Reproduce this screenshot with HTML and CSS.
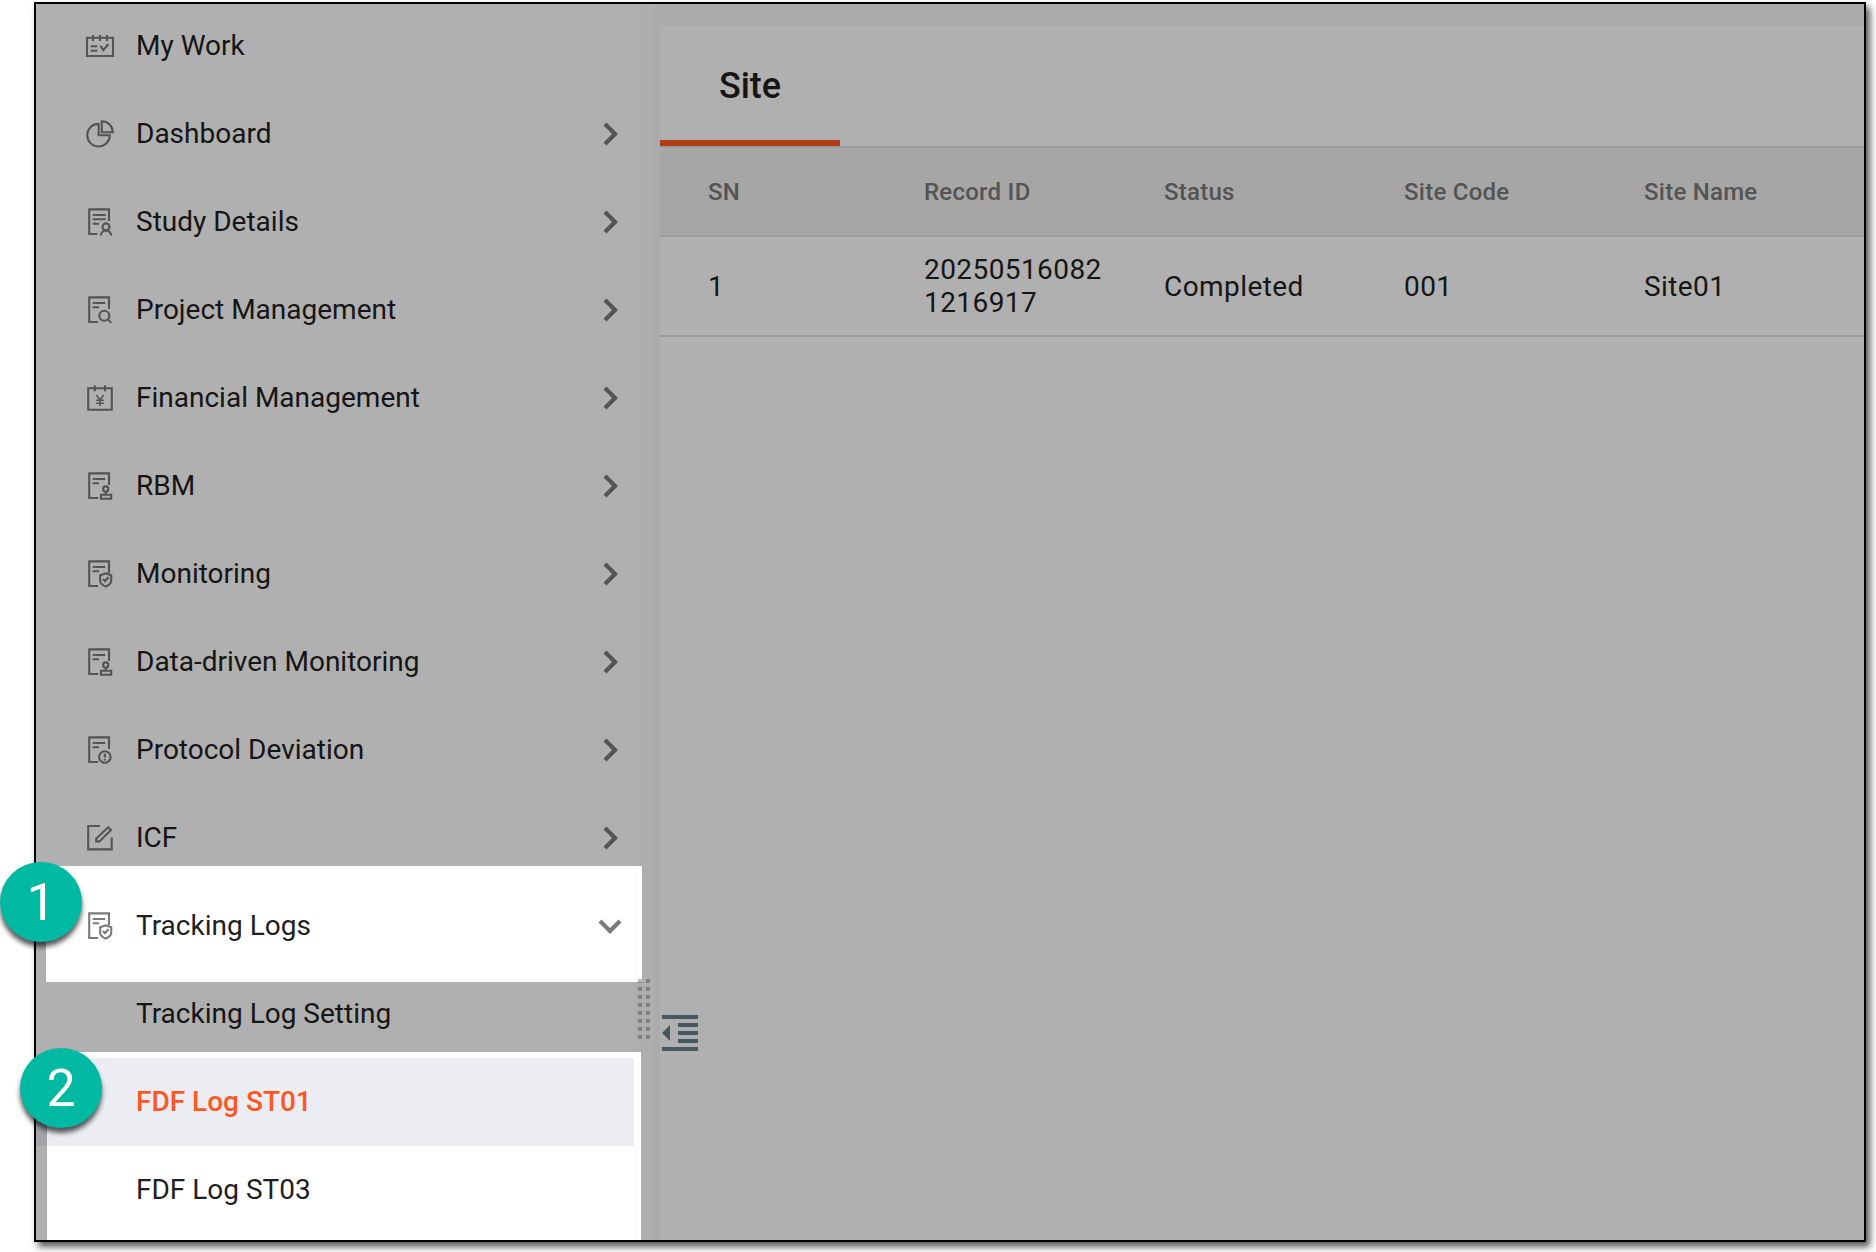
FILE: index.html
```html
<!DOCTYPE html>
<html lang="en">
<head>
<meta charset="utf-8">
<title>Site</title>
<link rel="stylesheet" href="styles.css">
</head>
<body>
<svg class="symbols" aria-hidden="true">
  <symbol id="doc" viewBox="0 0 28 28"><path d="M12 26H3.2V1.4H23V13M6.7 7H19.2M6.7 11.3H13"/></symbol>
  <symbol id="shield" viewBox="0 0 28 28"><path d="M19.7 13.3L25.2 15.3V21.5Q24.8 24.2 19.7 26.6Q14.5 24.2 14.2 21.5V15.3ZM16.9 19.1L19 21.2L22.5 17.2"/></symbol>
  <symbol id="stamp" viewBox="0 0 28 28"><circle cx="19.7" cy="17" r="2.6"/><path d="M19.7 19.6V22.6M14.9 22.7H25.2V26.7H14.9Z"/></symbol>
  <symbol id="next" viewBox="0 0 28 28"><path d="M9 4L19 14L9 24"/></symbol>
</svg>
<div class="frame">
  <nav class="sidebar">
    <a class="item"><svg class="icon" viewBox="0 0 28 28"><path d="M1 5.8H27V24H1ZM7 3V9M14 3V9M21 3V9M4.8 14.3H11.3M4.8 18.7H11.3M14.5 13.6L17.2 18.2L22.4 12.2"/></svg><span class="label">My Work</span></a>
    <a class="item"><svg class="icon" viewBox="0 0 28 28"><path d="M12.7 3.9A11.3 11.3 0 1 0 23.8 15.2H12.7ZM15.8 1.3V12.2H26.8A11 11 0 0 0 15.8 1.3Z"/></svg><span class="label">Dashboard</span><svg class="chevron"><use href="#next"/></svg></a>
    <a class="item"><svg class="icon" viewBox="0 0 28 28"><path d="M11.5 26H3.2V1.4H23V13M6.7 7H19.7M6.7 11.3H19.7M6.7 15.7H13M14.8 27.6A5.2 5.2 0 0 1 25.2 27.6"/><circle cx="20" cy="18.9" r="3.5"/></svg><span class="label">Study Details</span><svg class="chevron"><use href="#next"/></svg></a>
    <a class="item"><svg class="icon" viewBox="0 0 28 28"><use href="#doc"/><circle cx="18.3" cy="19.7" r="5"/><path d="M22 23.4L25.3 26.9"/></svg><span class="label">Project Management</span><svg class="chevron"><use href="#next"/></svg></a>
    <a class="item"><svg class="icon" viewBox="0 0 28 28"><path d="M2.2 4.3H25.8V25.8H2.2ZM8.7 1.3V7.2M19 1.3V7.2"/><path class="fine" d="M10.4 11L14 16L17.6 11M14 16V22M10.2 16.3H17.8M10.2 19.2H17.8"/></svg><span class="label">Financial Management</span><svg class="chevron"><use href="#next"/></svg></a>
    <a class="item"><svg class="icon" viewBox="0 0 28 28"><use href="#doc"/><use href="#stamp"/></svg><span class="label">RBM</span><svg class="chevron"><use href="#next"/></svg></a>
    <a class="item"><svg class="icon" viewBox="0 0 28 28"><use href="#doc"/><use href="#shield"/></svg><span class="label">Monitoring</span><svg class="chevron"><use href="#next"/></svg></a>
    <a class="item"><svg class="icon" viewBox="0 0 28 28"><use href="#doc"/><use href="#stamp"/></svg><span class="label">Data-driven Monitoring</span><svg class="chevron"><use href="#next"/></svg></a>
    <a class="item"><svg class="icon" viewBox="0 0 28 28"><use href="#doc"/><circle cx="18.8" cy="21" r="5.8"/><path d="M18.8 17.4V21.8M18.8 23V24.6"/></svg><span class="label">Protocol Deviation</span><svg class="chevron"><use href="#next"/></svg></a>
    <a class="item"><svg class="icon" viewBox="0 0 28 28"><path d="M14 2H2.2V25.4H25.7V13.6M22.2 3.2L25 6L13.5 17.4H10.2V14.6Z"/></svg><span class="label">ICF</span><svg class="chevron"><use href="#next"/></svg></a>
    <a class="item"><svg class="icon" viewBox="0 0 28 28"><use href="#doc"/><use href="#shield"/></svg><span class="label">Tracking Logs</span><svg class="chevron" viewBox="0 0 28 28"><path d="M4 9L14 19L24 9"/></svg></a>
    <a class="item sub"><span class="label">Tracking Log Setting</span></a>
    <a class="item sub active"><span class="label">FDF Log ST01</span></a>
    <a class="item sub"><span class="label">FDF Log ST03</span></a>
  </nav>
  <div class="splitter"><div class="grip"></div></div>
  <main class="main">
    <div class="tabs"><div class="tab">Site</div></div>
    <div class="row head"><span>SN</span><span>Record ID</span><span>Status</span><span>Site Code</span><span>Site Name</span></div>
    <div class="row"><span>1</span><span>20250516082<br>1216917</span><span>Completed</span><span>001</span><span>Site01</span></div>
    <svg class="collapse" viewBox="0 0 36 36"><path d="M0 0H36V4H0ZM16 8H36V12H16ZM16 16H36V20H16ZM16 24H36V28H16ZM0 32H36V36H0ZM0 18L8 10V26Z"/></svg>
  </main>
  <div class="shade"></div>
</div>
<div class="badge one">1</div>
<div class="badge two">2</div>
</body>
</html>
```
FILE: styles.css
```css
* { box-sizing: border-box; }
body {
  margin: 0;
  height: 1252px;
  padding: 2px 10px 10px 34px;
  position: relative;
  overflow: hidden;
  background: #fff;
  color: #1f1f1f;
  font-family: Roboto, "Liberation Sans", sans-serif;
  font-size: 28px;
}
.symbols { position: absolute; width: 0; height: 0; }
.frame {
  position: relative;
  display: flex;
  height: 1240px;
  border: 2px solid #000;
  box-shadow: 4px 5px 7px rgba(0, 0, 0, .65);
}

/* Navigation */
.sidebar {
  width: 598px;
  height: 1236px;
  overflow: hidden;
  display: flex;
  flex-direction: column;
}
.item {
  flex: 0 0 88px;
  display: flex;
  align-items: center;
  padding: 0 10px 0 50px;
}
.item:first-child { flex-basis: 86px; padding-bottom: 2px; }
.icon {
  width: 28px;
  height: 28px;
  margin-right: 22px;
  overflow: visible;
  fill: none;
  stroke: #7a7a7a;
  stroke-width: 2.1;
}
.fine { stroke-width: 1.6; }
.label { flex: 1; white-space: nowrap; padding-bottom: 2px; }
.chevron {
  width: 28px;
  height: 28px;
  fill: none;
  stroke: #7a7a7a;
  stroke-width: 4.2;
}
.sub { padding-left: 100px; }
.active { background: #ecedf2; color: #ff5722; font-weight: 500; }

.splitter {
  width: 26px;
  padding: 975px 0 0 4px;
  background: linear-gradient(90deg, #fbfefd 19px, #f8f8f8 19px);
}
.grip {
  width: 12px;
  height: 60px;
  background: repeating-linear-gradient(90deg, #bcbcbc 0 4px, transparent 4px 8px);
  -webkit-mask: repeating-linear-gradient(180deg, #000 0 4px, transparent 4px 8px);
  mask: repeating-linear-gradient(180deg, #000 0 4px, transparent 4px 8px);
}

/* Records */
.main {
  flex: 1;
  display: flex;
  flex-direction: column;
  border-top: 22px solid #f8f8f8;
}
.tabs {
  height: 122px;
  border-bottom: 2px solid #e1e1e1;
  display: flex;
}
.tab {
  width: 180px;
  border-bottom: 6px solid #ff5722;
  padding-top: 5px;
  line-height: 110px;
  text-align: center;
  font-size: 36px;
  font-weight: 500;
}
.row {
  height: 100px;
  display: grid;
  grid-template-columns: repeat(4, 240px) 1fr;
  align-items: center;
  border-bottom: 2px solid #e1e1e1;
  line-height: 33px;
  letter-spacing: .42px;
}
.row span { padding-left: 24px; }
.row span:first-child { padding-left: 48px; }
.head {
  height: 89px;
  padding-top: 2px;
  background: #f1f1f1;
  color: #7a7a7a;
  font-size: 24px;
  font-weight: 500;
  letter-spacing: .25px;
}
.collapse { width: 36px; height: 36px; margin: 678px 0 0 2px; fill: #647d89; }

/* Dimming layer with two openings over the highlighted entries */
.shade {
  position: absolute;
  inset: 0;
  background: rgba(0, 0, 0, .31);
  clip-path: polygon(evenodd,
    0 0, 1828px 0, 1828px 1236px, 0 1236px, 0 0,
    10px 862px, 606px 862px, 606px 978px, 10px 978px, 10px 862px, 0 0,
    11px 1048px, 605px 1048px, 605px 1236px, 11px 1236px, 11px 1048px, 0 0);
}

.badge {
  position: absolute;
  width: 82px;
  height: 80px;
  border-radius: 50%;
  background: #00b9a3;
  box-shadow: 0 5px 5px rgba(0, 0, 0, .65);
  color: #fff;
  font-size: 52px;
  line-height: 82px;
  text-align: center;
}
.one { left: 0; top: 862px; }
.two { left: 20px; top: 1048px; }
```
